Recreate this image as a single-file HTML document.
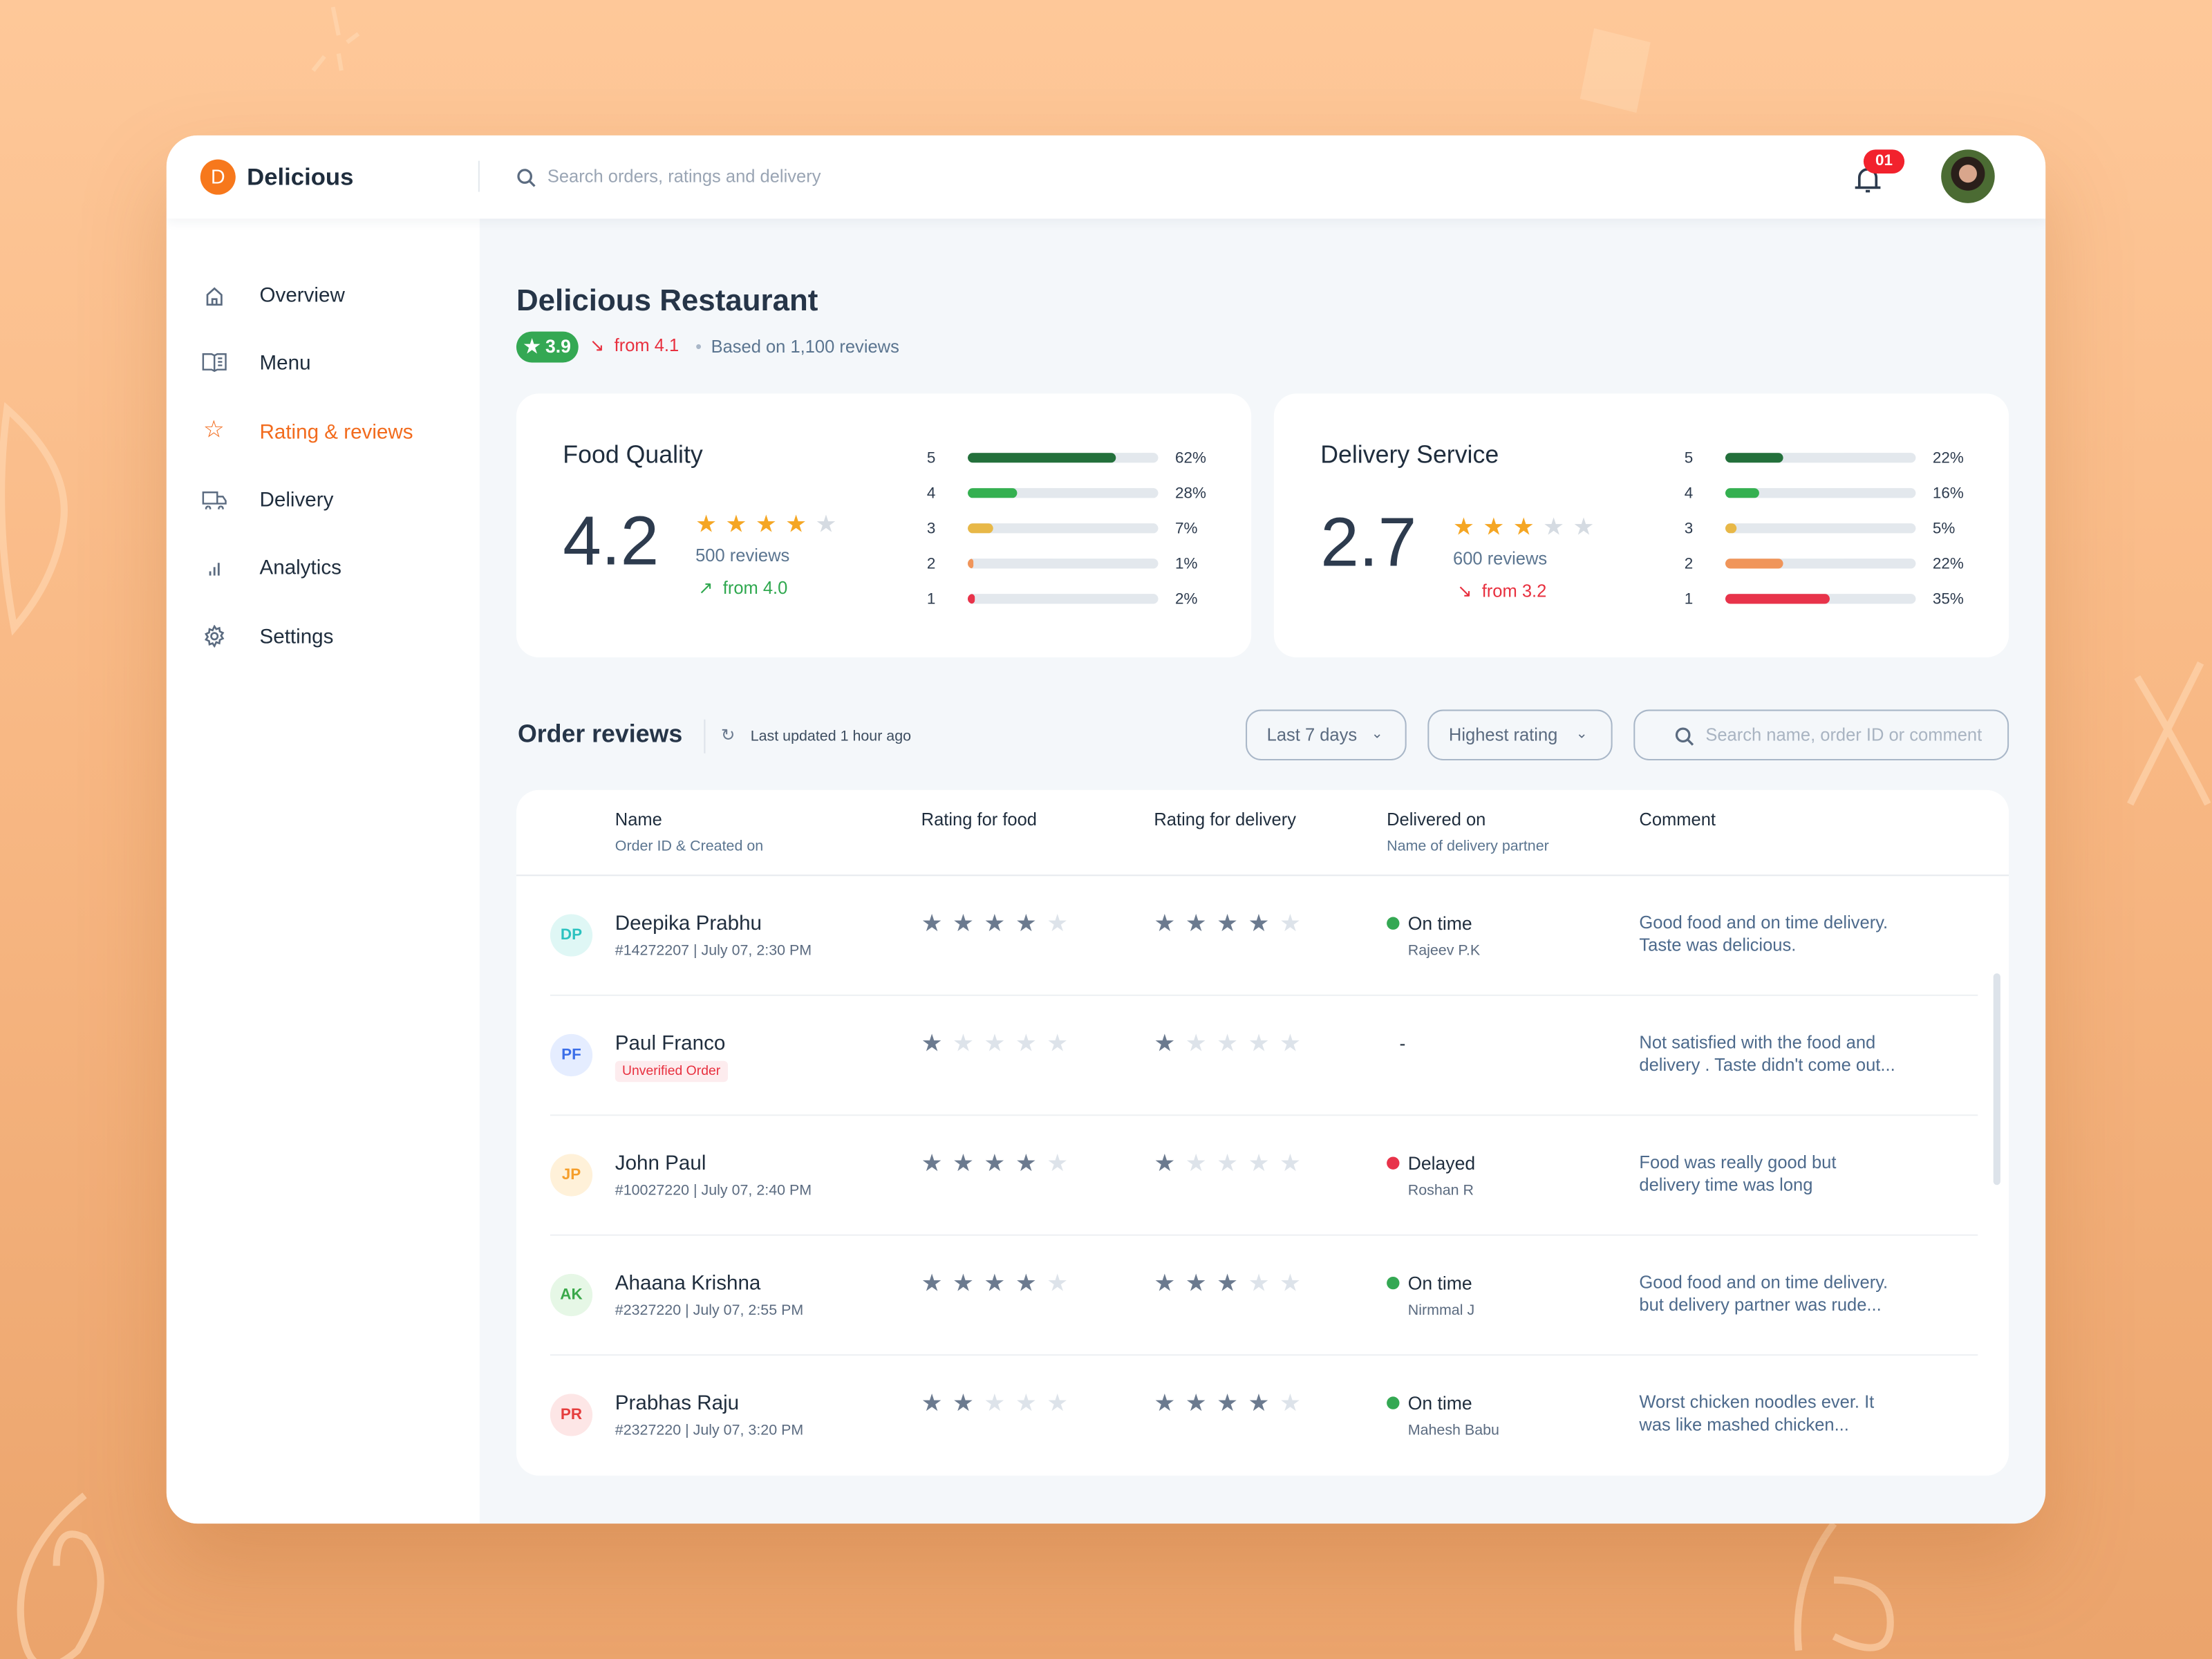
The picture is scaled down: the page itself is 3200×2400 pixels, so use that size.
<!DOCTYPE html>
<html><head><meta charset="utf-8"><style>
*{margin:0;padding:0;box-sizing:border-box}
html,body{width:3200px;height:2400px;overflow:hidden}
body{background:linear-gradient(180deg,#fec899 0%,#f8b884 45%,#eba46c 100%);font-family:"Liberation Sans",sans-serif;color:#1f2d3d}
#s{position:absolute;left:0;top:0;width:1568px;height:1176px;transform:scale(2.040816);transform-origin:0 0}
.a{position:absolute;white-space:nowrap;line-height:1}
.card{position:absolute;left:118px;top:96px;width:1332px;height:984px;background:#f4f7fa;border-radius:22px;overflow:hidden;box-shadow:0 30px 60px rgba(170,90,30,.25)}
.hdr{position:absolute;left:0;top:0;width:1332px;height:59px;background:#fff;box-shadow:0 2px 8px rgba(30,50,80,.06);z-index:2}
.side{position:absolute;left:0;top:59px;width:222px;height:925px;background:#fff}
.nav{position:absolute;left:66px;font-size:14.5px;color:#1f2d3d}
.ic{position:absolute;left:27px}
.box{position:absolute;background:#fff;border-radius:16px}
.bl{position:absolute;font-size:11px;color:#2d3b4e}
.bar{position:absolute;width:135px;height:7px;border-radius:4px;background:#e3e8ed;overflow:hidden}
.bar i{display:block;height:7px;border-radius:4px}
.st{position:absolute;font-size:17px;letter-spacing:7px;line-height:1}
.on{color:#6b7a8f}.off{color:#dde3ea}
.hd{position:absolute;font-size:12.5px;color:#1f2d3d}
.sub{position:absolute;font-size:10.5px;color:#5b7590}
.av{position:absolute;left:24px;width:30px;height:30px;border-radius:50%;font-size:11px;font-weight:bold;text-align:center;line-height:30px}
.nm{position:absolute;left:70px;font-size:14.5px;color:#1f2d3d}
.id{position:absolute;left:70px;font-size:10.5px;color:#5b6b80}
.cm{position:absolute;left:796px;font-size:12.5px;color:#4d6a8c;line-height:16px}
.dv{position:absolute;left:617px;font-size:13px;color:#1f2d3d}
.dot{display:inline-block;width:9px;height:9px;border-radius:50%;margin-right:6px;vertical-align:0}
.sep{position:absolute;left:24px;width:1012px;height:1px;background:#edf0f3}
.dd{position:absolute;top:407px;height:36px;border:1px solid #a9b7c8;border-radius:11px;font-size:12.5px;color:#5b6b80;line-height:34px;padding-left:14px}
.rw{position:absolute;left:0;width:1058px;height:85px}
</style></head><body><div id="s">
<svg class="a" style="left:0;top:0" width="1568" height="1176" fill="none" stroke="#ffd9b5" stroke-width="5" opacity=".6">
<path d="M236 5 l4 20 M230 40 l-8 10 M246 30 l8 -6 M240 38 l2 12" stroke-width="3"/>
<path d="M1130 20 l40 10 -10 50 -40 -10z" fill="#ffd5ae" stroke="none"/>
<path d="M5 290 q45 40 40 80 t-35 75 q-15 -80 -5 -155z"/>
<path d="M1515 480 q30 50 50 90 M1560 470 q-30 60 -50 100"/>
<path d="M60 1060 q-50 40 -45 90 t40 20 q30 -50 5 -80 q-20 -10 -20 20"/>
<path d="M1300 1080 q-30 40 -25 90 M1300 1120 q40 0 40 30 t-40 10"/>
</svg>
<div class="card">
 <div class="hdr">
  <div class="a" style="left:24px;top:17px;width:25px;height:25px;border-radius:50%;background:#f7781c;color:#fff;font-size:14px;text-align:center;line-height:25px">D</div>
  <div class="a" style="left:57px;top:21px;font-size:17px;font-weight:bold;color:#1f2d3d">Delicious</div>
  <div class="a" style="left:221px;top:18px;width:1px;height:22px;background:#e3e8ed"></div>
  <svg class="a" style="left:248px;top:23px" width="14" height="14" viewBox="0 0 14 14" fill="none" stroke="#5b6b80" stroke-width="1.6"><circle cx="6" cy="6" r="4.5"/><path d="M9.5 9.5 13 13"/></svg>
  <div class="a" style="left:270px;top:23px;font-size:12.5px;color:#9aa5b4">Search orders, ratings and delivery</div>
  <svg class="a" style="left:1195px;top:20px" width="22" height="22" viewBox="0 0 22 22" fill="none" stroke="#2d3b4e" stroke-width="1.8"><path d="M5 17 V10 a6 6 0 0 1 12 0 V17 M2 17 h18 M9.5 19.5 h3"/></svg>
  <div class="a" style="left:1203px;top:10px;width:29px;height:17px;border-radius:9px;background:#f2222d;color:#fff;font-size:11px;font-weight:bold;text-align:center;line-height:17px">01</div>
  <div class="a" style="left:1258px;top:10px;width:38px;height:38px;border-radius:50%;background:radial-gradient(circle at 50% 45%,#d9a68c 0 22%,#2a1f1a 23% 42%,#4b6b33 43%)"></div>
 </div>
 <div class="side">
  <svg class="ic" style="top:48px" width="14" height="14" viewBox="0 0 14 14" fill="none" stroke="#5b6b80" stroke-width="1.3"><path d="M2 6 7 1.5 12 6 V13 H2z M5.5 13 V9 h3 v4"/></svg>
  <div class="nav" style="top:47px">Overview</div>
  <svg class="ic" style="top:95px;left:25px" width="18" height="14" viewBox="0 0 18 14" fill="none" stroke="#5b6b80" stroke-width="1.2"><path d="M1 1 h6 l2 1 2-1 h6 v11 h-6 l-2 1 -2-1 H1z M9 2 v11 M11.5 4 h3 M11.5 6.5 h3 M11.5 9 h3"/></svg>
  <div class="nav" style="top:95px">Menu</div>
  <div class="a" style="left:26px;top:141px;font-size:17px;color:#f26b1d">☆</div>
  <div class="nav" style="top:144px;color:#f26b1d">Rating &amp; reviews</div>
  <svg class="ic" style="top:192px;left:25px" width="18" height="14" viewBox="0 0 18 14" fill="none" stroke="#5b6b80" stroke-width="1.2"><path d="M1 2 h10 v8 H1z M11 5 h4 l2 3 v2 h-6 M4.5 12 a1.5 1.5 0 1 0 .1 0 M13.5 12 a1.5 1.5 0 1 0 .1 0"/></svg>
  <div class="nav" style="top:192px">Delivery</div>
  <svg class="ic" style="top:241px" width="14" height="14" viewBox="0 0 14 14" stroke="#5b6b80" stroke-width="1.4"><path d="M4 12 V9 M7 12 V6 M10 12 V3"/></svg>
  <div class="nav" style="top:240px">Analytics</div>
  <svg class="ic" style="top:288px;left:26px" width="16" height="16" viewBox="0 0 16 16" fill="none" stroke="#5b6b80" stroke-width="1.3"><circle cx="8" cy="8" r="2.3"/><path d="M8 1 l1.3 2 2.2-.8 .3 2.4 2.2 1 -1.3 2 1.3 2 -2.2 1 -.3 2.4 -2.2-.8 L8 15 6.7 13 4.5 13.8 4.2 11.4 2 10.4 3.3 8.4 2 6.4 4.2 5.4 4.5 3 6.7 3.8z"/></svg>
  <div class="nav" style="top:289px">Settings</div>
 </div>
 <div class="a" style="left:248px;top:107px;font-size:21.5px;font-weight:bold;color:#263548">Delicious Restaurant</div>
 <div class="a" style="left:248px;top:139px;width:44px;height:22px;border-radius:11px;background:#34a853;color:#fff;font-size:13px;font-weight:bold;line-height:22px;text-align:center">★ 3.9</div>
 <div class="a" style="left:300px;top:143px;font-size:12.5px;color:#e8303f">↘&nbsp; from 4.1</div>
 <div class="a" style="left:375px;top:144px;font-size:12.5px;color:#a9b7c8">•</div>
 <div class="a" style="left:386px;top:144px;font-size:12.5px;color:#5b7590">Based on 1,100 reviews</div>

 <div class="box" style="left:248px;top:183px;width:521px;height:187px">
  <div class="a" style="left:33px;top:35px;font-size:17.5px;color:#1f2d3d">Food Quality</div>
  <div class="a" style="left:33px;top:81px;font-size:49px;color:#2d3b4e">4.2</div>
  <div class="st" style="left:127px;top:84px;color:#f5a623;letter-spacing:6px">★★★★<span style="color:#d5dbe2">★</span></div>
  <div class="a" style="left:127px;top:109px;font-size:12.5px;color:#5b7590">500 reviews</div>
  <div class="a" style="left:129px;top:132px;font-size:12.5px;color:#2fa84f">↗&nbsp; from 4.0</div>
  <div class="bl" style="left:291px;top:40px">5</div><div class="bar" style="left:320px;top:42px"><i style="width:78%;background:#23703b"></i></div><div class="bl" style="left:467px;top:40px">62%</div>
  <div class="bl" style="left:291px;top:65px">4</div><div class="bar" style="left:320px;top:67px"><i style="width:26%;background:#34b050"></i></div><div class="bl" style="left:467px;top:65px">28%</div>
  <div class="bl" style="left:291px;top:90px">3</div><div class="bar" style="left:320px;top:92px"><i style="width:13%;background:#e8b847"></i></div><div class="bl" style="left:467px;top:90px">7%</div>
  <div class="bl" style="left:291px;top:115px">2</div><div class="bar" style="left:320px;top:117px"><i style="width:3%;background:#f0955a"></i></div><div class="bl" style="left:467px;top:115px">1%</div>
  <div class="bl" style="left:291px;top:140px">1</div><div class="bar" style="left:320px;top:142px"><i style="width:4%;background:#e8334a"></i></div><div class="bl" style="left:467px;top:140px">2%</div>
 </div>
 <div class="box" style="left:785px;top:183px;width:521px;height:187px">
  <div class="a" style="left:33px;top:35px;font-size:17.5px;color:#1f2d3d">Delivery Service</div>
  <div class="a" style="left:33px;top:82px;font-size:49px;color:#2d3b4e">2.7</div>
  <div class="st" style="left:127px;top:86px;color:#f5a623;letter-spacing:6px">★★★<span style="color:#d5dbe2">★★</span></div>
  <div class="a" style="left:127px;top:111px;font-size:12.5px;color:#5b7590">600 reviews</div>
  <div class="a" style="left:130px;top:134px;font-size:12.5px;color:#e8303f">↘&nbsp; from 3.2</div>
  <div class="bl" style="left:291px;top:40px">5</div><div class="bar" style="left:320px;top:42px"><i style="width:30%;background:#23703b"></i></div><div class="bl" style="left:467px;top:40px">22%</div>
  <div class="bl" style="left:291px;top:65px">4</div><div class="bar" style="left:320px;top:67px"><i style="width:18%;background:#34b050"></i></div><div class="bl" style="left:467px;top:65px">16%</div>
  <div class="bl" style="left:291px;top:90px">3</div><div class="bar" style="left:320px;top:92px"><i style="width:6%;background:#e8b847"></i></div><div class="bl" style="left:467px;top:90px">5%</div>
  <div class="bl" style="left:291px;top:115px">2</div><div class="bar" style="left:320px;top:117px"><i style="width:30%;background:#f0955a"></i></div><div class="bl" style="left:467px;top:115px">22%</div>
  <div class="bl" style="left:291px;top:140px">1</div><div class="bar" style="left:320px;top:142px"><i style="width:55%;background:#e8334a"></i></div><div class="bl" style="left:467px;top:140px">35%</div>
 </div>

 <div class="a" style="left:249px;top:416px;font-size:17.5px;font-weight:bold;color:#263548">Order reviews</div>
 <div class="a" style="left:381px;top:414px;width:1px;height:24px;background:#dde3ea"></div>
 <div class="a" style="left:393px;top:419px;font-size:12px;color:#6b7a8f">↻</div>
 <div class="a" style="left:414px;top:421px;font-size:10.5px;color:#3d4d60">Last updated 1 hour ago</div>
 <div class="dd" style="left:765px;width:114px">Last 7 days <span style="position:absolute;left:88px;font-size:10px">⌄</span></div>
 <div class="dd" style="left:894px;width:131px">Highest rating <span style="position:absolute;left:104px;font-size:10px">⌄</span></div>
 <div class="dd" style="left:1040px;width:266px;padding-left:50px;color:#a9b4c2">Search name, order ID or comment
  <svg style="position:absolute;left:28px;top:11px" width="14" height="14" viewBox="0 0 14 14" fill="none" stroke="#5b6b80" stroke-width="1.6"><circle cx="6" cy="6" r="4.5"/><path d="M9.5 9.5 13 13"/></svg></div>

 <div class="box" style="left:248px;top:464px;width:1058px;height:486px;overflow:hidden">
  <div class="hd" style="left:70px;top:14px">Name</div><div class="sub" style="left:70px;top:34px">Order ID &amp; Created on</div>
  <div class="hd" style="left:287px;top:14px">Rating for food</div>
  <div class="hd" style="left:452px;top:14px">Rating for delivery</div>
  <div class="hd" style="left:617px;top:14px">Delivered on</div><div class="sub" style="left:617px;top:34px">Name of delivery partner</div>
  <div class="hd" style="left:796px;top:14px">Comment</div>
  <div class="a" style="left:0;top:60px;width:1058px;height:1px;background:#e6eaee"></div>
  <div class="a" style="left:1047px;top:130px;width:5px;height:150px;border-radius:3px;background:#dde3ea"></div>
 <div class="rw" style="top:4px">
  <div class="av" style="top:84px;background:#dff7f5;color:#2cc2c0">DP</div>
  <div class="nm" style="top:83px">Deepika Prabhu</div><div class="id" style="top:104px">#14272207 | July 07, 2:30 PM</div>
  <div class="st on" style="left:287px;top:82px">★★★★<span class="off">★</span></div>
  <div class="st on" style="left:452px;top:82px">★★★★<span class="off">★</span></div>
  <div class="dv" style="top:83px"><span class="dot" style="background:#34a853"></span>On time</div>
  <div class="id" style="left:632px;top:104px">Rajeev P.K</div>
  <div class="cm" style="top:82px">Good food and on time delivery.<br>Taste was delicious.</div>
  <div class="sep" style="top:141px"></div>
  <div class="av" style="top:169px;background:#e5edff;color:#3b6ee8">PF</div>
  <div class="nm" style="top:168px">Paul Franco</div>
  <div class="a" style="left:70px;top:188px;height:15px;padding:0 5px;border-radius:3px;background:#fdecee;color:#e8303f;font-size:9.5px;line-height:15px">Unverified Order</div>
  <div class="st on" style="left:287px;top:167px">★<span class="off">★★★★</span></div>
  <div class="st on" style="left:452px;top:167px">★<span class="off">★★★★</span></div>
  <div class="dv" style="top:168px;left:626px">-</div>
  <div class="cm" style="top:167px">Not satisfied with the food and<br>delivery . Taste didn't come out...</div>
  <div class="sep" style="top:226px"></div>
  <div class="av" style="top:254px;background:#fff1d9;color:#f59e2b">JP</div>
  <div class="nm" style="top:253px">John Paul</div><div class="id" style="top:274px">#10027220 | July 07, 2:40 PM</div>
  <div class="st on" style="left:287px;top:252px">★★★★<span class="off">★</span></div>
  <div class="st on" style="left:452px;top:252px">★<span class="off">★★★★</span></div>
  <div class="dv" style="top:253px"><span class="dot" style="background:#e8334a"></span>Delayed</div>
  <div class="id" style="left:632px;top:274px">Roshan R</div>
  <div class="cm" style="top:252px">Food was really good but<br>delivery time was long</div>
  <div class="sep" style="top:311px"></div>
  <div class="av" style="top:339px;background:#e6f7e6;color:#3aa84a">AK</div>
  <div class="nm" style="top:338px">Ahaana Krishna</div><div class="id" style="top:359px">#2327220 | July 07, 2:55 PM</div>
  <div class="st on" style="left:287px;top:337px">★★★★<span class="off">★</span></div>
  <div class="st on" style="left:452px;top:337px">★★★<span class="off">★★</span></div>
  <div class="dv" style="top:338px"><span class="dot" style="background:#34a853"></span>On time</div>
  <div class="id" style="left:632px;top:359px">Nirmmal J</div>
  <div class="cm" style="top:337px">Good food and on time delivery.<br>but delivery partner was rude...</div>
  <div class="sep" style="top:396px"></div>
  <div class="av" style="top:424px;background:#fde6e6;color:#e53e3e">PR</div>
  <div class="nm" style="top:423px">Prabhas Raju</div><div class="id" style="top:444px">#2327220 | July 07, 3:20 PM</div>
  <div class="st on" style="left:287px;top:422px">★★<span class="off">★★★</span></div>
  <div class="st on" style="left:452px;top:422px">★★★★<span class="off">★</span></div>
  <div class="dv" style="top:423px"><span class="dot" style="background:#34a853"></span>On time</div>
  <div class="id" style="left:632px;top:444px">Mahesh Babu</div>
  <div class="cm" style="top:422px">Worst chicken noodles ever. It<br>was like mashed chicken...</div>
 </div>
 </div>
</div>
</div></body></html>
